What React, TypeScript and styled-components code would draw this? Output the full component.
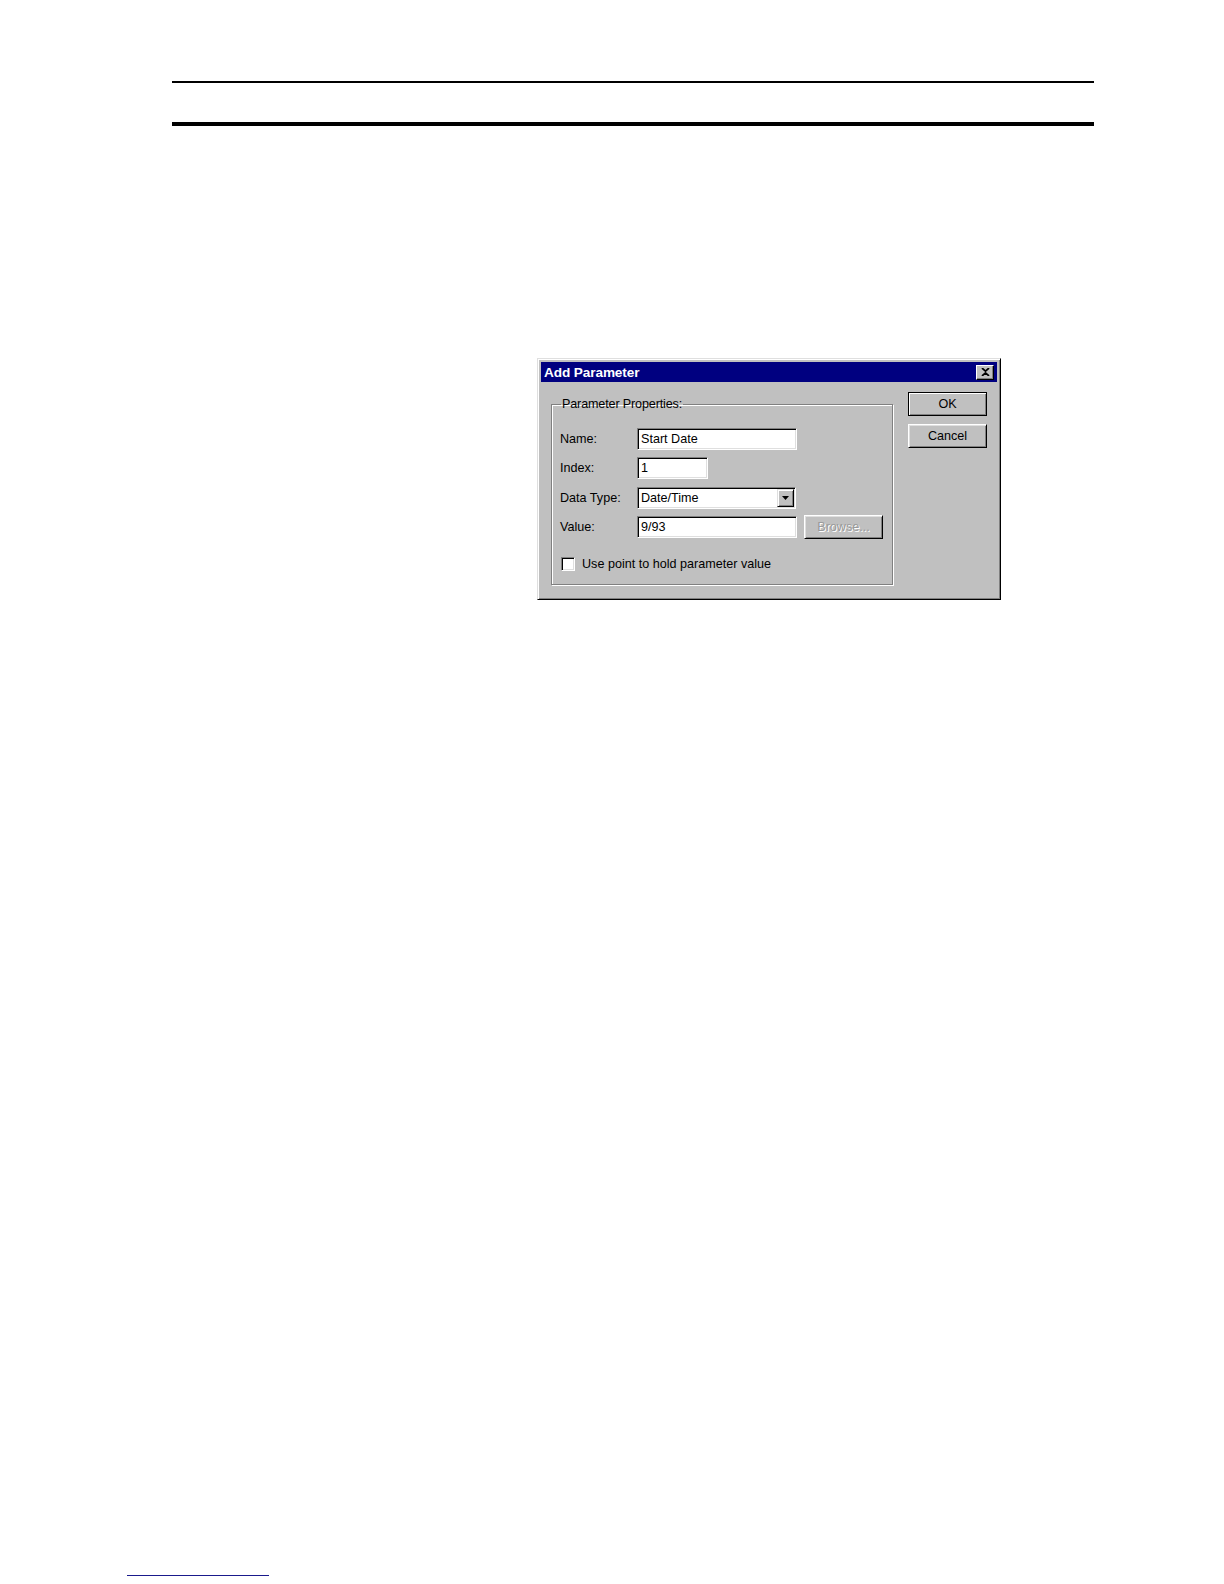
import React from "react";
import styled, { createGlobalStyle } from "styled-components";

const Global = createGlobalStyle`
  html, body {
    margin: 0;
    padding: 0;
    background: #ffffff;
  }
  body {
    font-family: "Liberation Sans", Arial, sans-serif;
  }
`;

const Page = styled.div`
  min-height: 100vh;
  display: flex;
  flex-direction: column;
  box-sizing: border-box;
`;

const Header = styled.div`
  margin: 81px 0 0 172px;
  width: 922px;
  display: flex;
  flex-direction: column;
`;

const Rule = styled.div<{ $weight: number; $gap: number }>`
  height: ${(p) => p.$weight}px;
  margin-top: ${(p) => p.$gap}px;
  background: #000;
`;

const Figure = styled.div`
  margin: 232px 0 0 537px;
`;

const Dialog = styled.div`
  width: 464px;
  height: 242px;
  box-sizing: border-box;
  background: #c0c0c0;
  padding: 3px;
  display: flex;
  flex-direction: column;
  border-top: 1px solid #dfdfdf;
  border-left: 1px solid #dfdfdf;
  border-right: 1px solid #000;
  border-bottom: 1px solid #000;
  box-shadow: inset 1px 1px 0 #ffffff, inset -1px -1px 0 #808080;
  font-size: 12.6px;
  color: #000;
`;

const TitleBar = styled.div`
  height: 20px;
  background: #000080;
  display: flex;
  align-items: center;
  justify-content: space-between;
  padding: 0 3px 0 3px;
`;

const Title = styled.span`
  color: #fff;
  font-weight: bold;
  font-size: 13.6px;
  letter-spacing: -0.1px;
`;

const CloseButton = styled.div`
  width: 18px;
  height: 15px;
  box-sizing: border-box;
  background: #c0c0c0;
  border-top: 1px solid #fff;
  border-left: 1px solid #fff;
  border-right: 1px solid #000;
  border-bottom: 1px solid #000;
  box-shadow: inset -1px -1px 0 #808080;
  display: flex;
  align-items: center;
  justify-content: center;
`;

const Body = styled.div`
  flex: 1;
  display: flex;
  padding: 10px 10px 0 10px;
  gap: 15px;
`;

const Group = styled.fieldset`
  margin: 5px 0 0 0;
  width: 344px;
  height: 188px;
  box-sizing: border-box;
  padding: 17px 8px 0 8px;
  border: 1px solid #808080;
  box-shadow: 1px 1px 0 #fff, inset 1px 1px 0 #fff;
  min-width: 0;
`;

const Legend = styled.legend`
  padding: 0 1px;
  margin-left: 1px;
  font-size: 12.6px;
  line-height: 14px;
  letter-spacing: -0.15px;
`;

const Form = styled.div`
  display: grid;
  grid-template-columns: 77px auto;
  grid-auto-rows: 22px;
  row-gap: 7.3px;
  align-items: center;
`;

const Label = styled.span`
  font-size: 12.6px;
`;

const FieldRow = styled.div`
  display: flex;
  align-items: center;
  gap: 7px;
`;

const TextBox = styled.div<{ $width: number }>`
  width: ${(p) => p.$width}px;
  height: 22px;
  box-sizing: border-box;
  background: #fff;
  border-top: 1px solid #808080;
  border-left: 1px solid #808080;
  border-right: 1px solid #fff;
  border-bottom: 1px solid #fff;
  box-shadow: inset 1px 1px 0 #000, inset -1px -1px 0 #dfdfdf;
  display: flex;
  align-items: center;
  justify-content: space-between;
  padding-left: 3px;
  font-size: 12.6px;
`;

const DropArrow = styled.div`
  width: 17px;
  height: 18px;
  margin-right: 1px;
  box-sizing: border-box;
  background: #c0c0c0;
  border-top: 1px solid #dfdfdf;
  border-left: 1px solid #dfdfdf;
  border-right: 1px solid #000;
  border-bottom: 1px solid #000;
  box-shadow: inset 1px 1px 0 #fff, inset -1px -1px 0 #808080;
  display: flex;
  align-items: center;
  justify-content: center;
`;

const Button = styled.div<{ $default?: boolean; $disabled?: boolean }>`
  width: 79px;
  height: 24px;
  box-sizing: border-box;
  background: #c0c0c0;
  display: flex;
  align-items: center;
  justify-content: center;
  font-size: 12.6px;
  border: 1px solid ${(p) => (p.$default ? "#000" : "transparent")};
  border-top-color: ${(p) => (p.$default ? "#000" : "#fff")};
  border-left-color: ${(p) => (p.$default ? "#000" : "#fff")};
  border-right-color: #000;
  border-bottom-color: #000;
  box-shadow: ${(p) =>
    p.$default
      ? "inset 1px 1px 0 #fff, inset -1px -1px 0 #808080"
      : "inset 1px 1px 0 #dfdfdf, inset -1px -1px 0 #808080"};
  color: ${(p) => (p.$disabled ? "#9a9a9a" : "#000")};
  text-shadow: ${(p) => (p.$disabled ? "1px 1px 0 #fff" : "none")};
`;

const Buttons = styled.div`
  display: flex;
  flex-direction: column;
  gap: 8px;
`;

const CheckRow = styled.div`
  display: flex;
  align-items: center;
  gap: 7px;
  margin: 19px 0 0 1px;
`;

const CheckBox = styled.div`
  width: 14px;
  height: 14px;
  box-sizing: border-box;
  background: #fff;
  border-top: 1px solid #808080;
  border-left: 1px solid #808080;
  border-right: 1px solid #fff;
  border-bottom: 1px solid #fff;
  box-shadow: inset 1px 1px 0 #000, inset -1px -1px 0 #dfdfdf;
`;

const Footer = styled.div`
  margin-top: auto;
  padding: 0 0 8px 127px;
`;

const FooterLine = styled.div`
  width: 142px;
  height: 1px;
  background: #1a1a8c;
`;

export default function App() {
  return (
    <Page>
      <Global />
      <Header>
        <Rule $weight={2} $gap={0} />
        <Rule $weight={4} $gap={39} />
      </Header>
      <Figure>
        <Dialog>
          <TitleBar>
            <Title>Add Parameter</Title>
            <CloseButton>
              <svg width="9" height="8" viewBox="0 0 9 8">
                <path d="M1 0 L4.5 3.2 L8 0 M1 8 L4.5 4.8 L8 8" stroke="#000" strokeWidth="1.7" fill="none" />
              </svg>
            </CloseButton>
          </TitleBar>
          <Body>
            <Group>
              <Legend>Parameter Properties:</Legend>
              <Form>
                <Label>Name:</Label>
                <TextBox $width={160}>Start Date</TextBox>
                <Label>Index:</Label>
                <TextBox $width={71}>1</TextBox>
                <Label>Data Type:</Label>
                <TextBox $width={159}>
                  Date/Time
                  <DropArrow>
                    <svg width="7" height="4" viewBox="0 0 7 4">
                      <path d="M0 0 H7 L3.5 4 Z" fill="#000" />
                    </svg>
                  </DropArrow>
                </TextBox>
                <Label>Value:</Label>
                <FieldRow>
                  <TextBox $width={160}>9/93</TextBox>
                  <Button $disabled>Browse...</Button>
                </FieldRow>
              </Form>
              <CheckRow>
                <CheckBox />
                <Label>Use point to hold parameter value</Label>
              </CheckRow>
            </Group>
            <Buttons>
              <Button $default>OK</Button>
              <Button>Cancel</Button>
            </Buttons>
          </Body>
        </Dialog>
      </Figure>
      <Footer>
        <FooterLine />
      </Footer>
    </Page>
  );
}
